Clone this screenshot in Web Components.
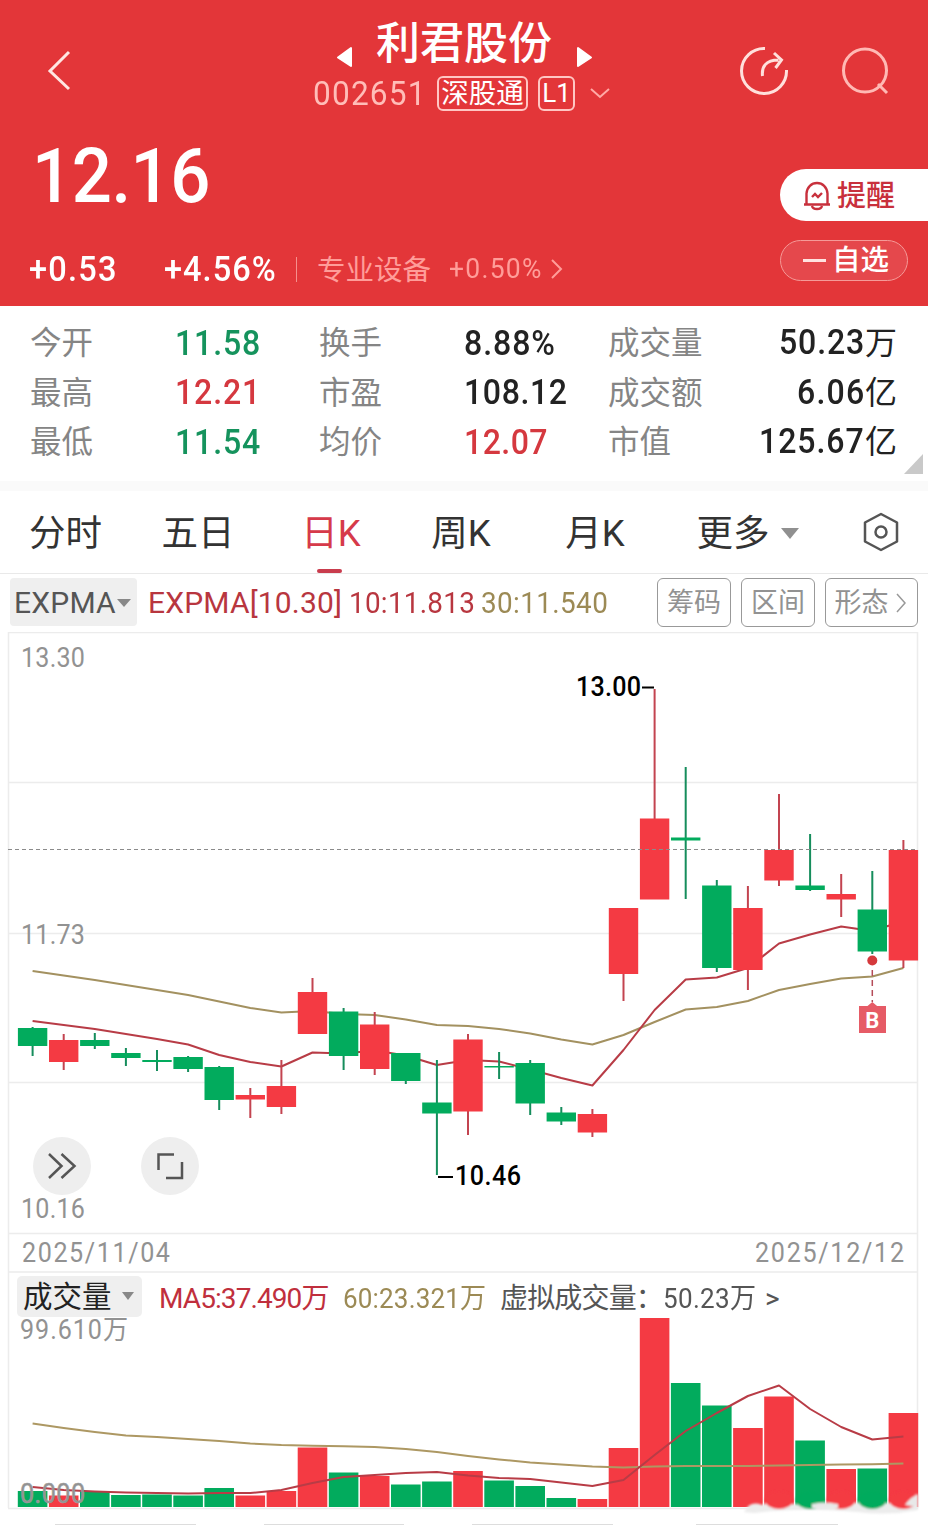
<!DOCTYPE html>
<html lang="zh-CN">
<head>
<meta charset="utf-8">
<title>利君股份 002651</title>
<style>
  body {
    margin: 0;
    background: #fff;
    font-family: Roboto, "Noto Sans CJK SC", sans-serif;
    color: #222;
  }
</style>
</head>
<body>
<stock-page></stock-page>

<script>
const RED = '#f43a43';
const GREEN = '#02ab5d';
const PITCH = 31.1;
const FIRST_X = 32.6;
// Figures are set narrower than the face's default
const CONDENSE = 0.93;

// [direction, body top, body bottom, wick top, wick bottom]
const CANDLES = [
  ['g', 1028, 1046, 1027, 1056],
  ['r', 1040, 1062, 1034, 1070],
  ['g', 1040, 1046, 1033, 1049],
  ['g', 1053, 1058, 1048, 1066],
  ['g', 1060, 1062, 1050, 1071],
  ['g', 1057, 1069, 1056, 1072],
  ['g', 1067, 1100, 1066, 1110],
  ['r', 1095, 1099.5, 1088, 1118],
  ['r', 1086, 1107, 1060, 1114],
  ['r', 992, 1034, 978, 1034],
  ['g', 1011.5, 1056, 1008, 1070],
  ['r', 1024.5, 1069, 1012, 1075],
  ['g', 1053, 1081, 1053, 1084],
  ['g', 1102.5, 1113.5, 1060, 1175],
  ['r', 1039.5, 1111.5, 1034, 1135],
  ['g', 1066, 1067.5, 1052, 1079],
  ['g', 1063, 1103.5, 1060, 1115],
  ['g', 1112.5, 1121.5, 1107, 1125],
  ['r', 1114, 1132.5, 1109, 1137],
  ['r', 908, 974, 908, 1001],
  ['r', 818.5, 899.5, 689, 899],
  ['g', 837.5, 840.5, 767, 899],
  ['g', 885.5, 968, 880, 972],
  ['r', 908, 970, 886, 990],
  ['r', 850, 880.5, 794, 886],
  ['g', 885.5, 890, 834, 891],
  ['r', 894, 899.5, 874, 917],
  ['g', 909.5, 951.5, 871, 954],
  ['r', 850, 960.5, 840, 968]
];

const VOLUME_TOPS = [
  1491, 1495.5, 1491, 1495, 1494.5, 1495.5, 1488, 1495.5, 1491, 1447.5,
  1472.5, 1476, 1484.5, 1481.5, 1471, 1480.5, 1486, 1498, 1499, 1448,
  1318, 1383, 1405.5, 1428, 1396.5, 1440.5, 1469, 1468.5, 1413
];

const EXPMA10 = [
  1021, 1025, 1029, 1034, 1039, 1044.5, 1055, 1062, 1066.5, 1052.5,
  1053.5, 1050.5, 1055.5, 1065, 1060, 1061.5, 1069.5, 1078, 1085.5, 1050,
  1010, 979.5, 977.5, 968, 943.5, 934.5, 926.5, 931, 921
];
const EXPMA30 = [
  971, 975.5, 980, 985, 990, 995, 1001.5, 1008, 1012.5, 1011,
  1014, 1015, 1019.5, 1025, 1026, 1029, 1033.5, 1039.5, 1044.5, 1035,
  1022, 1009.5, 1007, 1001, 990, 984, 978.5, 976.5, 968
];
const VOL_MA5 = [
  1487, 1490, 1491.5, 1492.5, 1493, 1493.5, 1493, 1493, 1490, 1483,
  1477, 1475, 1473, 1472, 1475.5, 1478, 1479, 1482.5, 1486, 1480,
  1455, 1431, 1413, 1396, 1385.5, 1409, 1427, 1439.5, 1436.5
];
const VOL_MA60 = [
  1423.5, 1428, 1432, 1435.5, 1437, 1439, 1441, 1443.5, 1445, 1445.7,
  1446.3, 1447, 1449, 1452, 1456, 1459.5, 1462.5, 1464.5, 1466.5, 1467.5,
  1466.5, 1466, 1466, 1466, 1465.5, 1465, 1464.5, 1464.2, 1463.5
];

const xAt = i => FIRST_X + i * PITCH;
const points = values => values.map((y, i) => `${xAt(i).toFixed(1)},${y}`).join(' ');
const label = (cls, x, y, width, text) =>
  `<text class="${cls}" transform="translate(${x} ${y}) scale(${CONDENSE} 1)" textLength="${width / CONDENSE}">${text}</text>`;

function define(name, html) {
  customElements.define(name, class extends HTMLElement {
    constructor() {
      super();
      this.attachShadow({ mode: 'open' }).innerHTML = html;
    }
  });
}

/**
 * A run of text tracked so that it fills the given width.
 * Runs that start with a figure or a sign are condensed first.
 */
class FitText extends HTMLElement {
  constructor() {
    super();
    this.attachShadow({ mode: 'open' }).innerHTML = `
      <style>
        :host { display: block; white-space: nowrap; flex: none; }
        span { display: inline-block; transform-origin: 0 50%; }
      </style>
      <span><slot></slot></span>`;
  }

  connectedCallback() {
    const run = this.shadowRoot.querySelector('span');
    const width = parseFloat(this.getAttribute('width'));
    const scale = /^[\d+]/.test(this.textContent) ? CONDENSE : 1;
    const count = [...this.textContent].length;
    run.style.letterSpacing = ((width / scale - run.offsetWidth) / count) + 'px';
    run.style.transform = `scaleX(${scale})`;
    this.style.width = width + 'px';
  }
}

// --- Header ---

define('stock-header', `
  <style>
    :host {
      display: flex;
      flex-direction: column;
      height: 306px;
      background: #e33639;
      color: #fff;
      overflow: hidden;
    }
    svg { display: block; flex: none; fill: none; }
    .nav { display: flex; height: 120px; }
    .back { margin: 50px 0 0 46px; }
    .title { width: 300px; margin-left: 240px; }
    .name { display: flex; height: 72px; padding-left: 24px; }
    .name svg { margin-top: 46px; }
    .name b { font-size: 44px; font-weight: 500; line-height: 64px; margin: 12px 25px 0 23px; width: 176px; white-space: nowrap; }
    .code { display: flex; align-items: center; height: 42px; }
    .code .num { font-size: 34px; color: #ffbdb8; }
    .tag {
      box-sizing: border-box; height: 35px; border: 2px solid #ffc6c3; border-radius: 6px;
      line-height: 31px; text-align: center; font-size: 27.5px; white-space: nowrap;
    }
    .share { margin: 46px 0 0 126px; }
    .search { margin: 46px 0 0 51px; }
    .body { display: flex; justify-content: space-between; height: 186px; }
    .price { font-size: 76px; font-weight: 500; line-height: 90px; margin: 11px 0 0 32px; }
    .change { display: flex; align-items: center; height: 40px; margin-top: 28px; padding-left: 29px; font-size: 35px; font-weight: 500; }
    .industry { color: #ff9d99; font-weight: 400; }
    .bar { width: 1px; height: 25px; background: #f5908d; margin: 0 20px 0 20px; }
    .side { width: 148px; padding-top: 49px; }
    .alert {
      display: flex; align-items: center; height: 52px; background: #fff; color: #c8303c;
      border-radius: 26px 0 0 26px; font-size: 29px; font-weight: 500; box-sizing: border-box; padding: 0 0 5px 23px;
    }
    .pick {
      display: flex; align-items: center; box-sizing: border-box; width: 128px; height: 41px; margin-top: 19px;
      border: 1.5px solid #f59a98; border-radius: 21px; background: #e5484c; font-size: 28.5px; font-weight: 500;
      padding-left: 22px; line-height: 38px;
    }
    .pick i { width: 23px; height: 3px; background: #ffe3e0; margin-right: 6px; }
  </style>
  <div class="nav">
    <svg class="back" width="27" height="42" viewBox="0 0 27 42"><path d="M23 2 4 21l19 18" stroke="#ffe6e2" stroke-width="3"/></svg>
    <div class="title">
      <div class="name">
        <svg width="16" height="23" viewBox="0 0 16 23"><path d="M14 2v18L1 11.500z" fill="#fff" stroke="#fff" stroke-width="2" stroke-linejoin="round"/></svg>
        <b>利君股份</b>
        <svg width="16" height="23" viewBox="0 0 16 23"><path d="M1 2v18l13-8.500z" fill="#fff" stroke="#fff" stroke-width="2" stroke-linejoin="round"/></svg>
      </div>
      <div class="code">
        <fit-text class="num" width="114">002651</fit-text>
        <span class="tag" style="width:91px;margin-left:10px">深股通</span>
        <span class="tag" style="width:37px;margin-left:10px;font-size:26px">L1</span>
        <svg width="22" height="14" viewBox="0 0 22 14" style="margin-left:14px"><path d="m2 3 9 8 9-8" stroke="#ffaaa6" stroke-width="2"/></svg>
      </div>
    </div>
    <svg class="share" width="50" height="50" viewBox="0 0 50 50" stroke="#ffe0dc" stroke-width="3">
      <path d="M26 2.500A22.500 22.500 0 1 0 47.500 24"/>
      <path d="M23.500 30c-1-9 3-16 16-16M35 7l7.500 7-6 8"/>
    </svg>
    <svg class="search" width="50" height="50" viewBox="0 0 50 50" stroke="#ffb9b4" stroke-width="3">
      <circle cx="25" cy="24.500" r="21.500"/><path d="m38 38 9 9"/>
    </svg>
  </div>
  <div class="body">
    <div>
      <fit-text class="price" width="178">12.16</fit-text>
      <div class="change">
        <fit-text width="89">+0.53</fit-text>
        <fit-text width="113" style="margin-left:46px">+4.56%</fit-text>
        <span class="bar" style="margin-left:19px"></span>
        <fit-text class="industry" width="114" style="font-size:28.500px;margin-top:-4px">专业设备</fit-text>
        <fit-text class="industry" width="94" style="font-size:28.500px;margin:-1px 0 0 18px">+0.50%</fit-text>
        <svg width="14" height="24" viewBox="0 0 14 24" style="margin-left:7px"><path d="m2 3 9 9-9 9" stroke="#ff9d99" stroke-width="2"/></svg>
      </div>
    </div>
    <div class="side">
      <div class="alert">
        <svg width="28" height="30" viewBox="0 0 28 30" stroke="#c8303c" stroke-width="2.400" style="margin:6px 6px 0 0">
          <path d="M1 23.500h26M3.500 23V12.500C4 6 8.500 2 14 2s10 4 10.500 10.500V23M9 25c1 4 9 4 10 0"/>
          <path d="m9 16 3-3 3 3 4-4"/>
        </svg>
        <span>提醒</span>
      </div>
      <div class="pick"><i></i><span>自选</span></div>
    </div>
  </div>
`);

// --- Quote figures ---

define('quote-stats', `
  <style>
    :host { display: block; position: relative; height: 175px; box-sizing: border-box; padding: 13px 31px 0 30px; }
    .row { display: flex; height: 49.500px; align-items: center; font-size: 34.500px; line-height: 49px; }
    .k { font-size: 31.500px; color: #858585; flex: none; }
    .k1 { width: 145px; }
    .k2 { width: 145px; }
    .k3 { width: 120px; }
    .v { width: 144px; flex: none; }
    .last { display: flex; flex: 1; justify-content: flex-end; }
    .last i { font-style: normal; font-size: 32px; }
    .up { color: #d5383f; }
    .down { color: #15935d; }
    fit-text { font-weight: 500; margin-top: -1px; }
    /* fold mark in the panel's corner */
    .fold { position: absolute; right: 5px; bottom: 7px; width: 19px; height: 20px; background: #c9c9c9; clip-path: polygon(100% 0, 100% 100%, 0 100%); }
  </style>
  <div class="row">
    <span class="k k1">今开</span><div class="v down"><fit-text width="86">11.58</fit-text></div>
    <span class="k k2">换手</span><div class="v"><fit-text width="92">8.88%</fit-text></div>
    <span class="k k3">成交量</span><span class="last"><fit-text width="86">50.23</fit-text><i>万</i></span>
  </div>
  <div class="row">
    <span class="k k1">最高</span><div class="v up"><fit-text width="86">12.21</fit-text></div>
    <span class="k k2">市盈</span><div class="v"><fit-text width="104">108.12</fit-text></div>
    <span class="k k3">成交额</span><span class="last"><fit-text width="68">6.06</fit-text><i>亿</i></span>
  </div>
  <div class="row">
    <span class="k k1">最低</span><div class="v down"><fit-text width="86">11.54</fit-text></div>
    <span class="k k2">均价</span><div class="v up"><fit-text width="84">12.07</fit-text></div>
    <span class="k k3">市值</span><span class="last"><fit-text width="106">125.67</fit-text><i>亿</i></span>
  </div>
  <i class="fold"></i>
`);

// --- Period tabs ---

class PeriodTab extends HTMLElement {
  constructor() {
    super();
    this.attachShadow({ mode: 'open' }).innerHTML = `
      <style>
        :host {
          display: flex; flex-direction: column; align-items: center; justify-content: space-between;
          height: 82px; color: #333; font-size: 36.500px; line-height: 85px; white-space: nowrap;
        }
        :host([active]) { color: #d63a4a; }
        span { display: block; height: 78px; }
        i { display: block; width: 25px; height: 4px; border-radius: 2px; margin-right: 4px; }
        :host([active]) i { background: #c93c4d; }
      </style>
      <span><slot></slot></span><i></i>`;
  }
}

define('period-tabs', `
  <style>
    :host { display: flex; height: 82px; border-top: 10px solid #fafafa; border-bottom: 1px solid #e9e9e9; padding-left: 29px; }
    .more { width: 0; height: 0; border: 9.500px solid transparent; border-top: 11px solid #909090; border-bottom: 0; margin: 37px 0 0 12px; }
    svg { margin: 21px 0 0 63px; fill: none; }
  </style>
  <period-tab style="width:73px">分时</period-tab>
  <period-tab style="width:72px;margin-left:60px">五日</period-tab>
  <period-tab style="width:60px;margin-left:67px" active>日K</period-tab>
  <period-tab style="width:62px;margin-left:69px">周K</period-tab>
  <period-tab style="width:62px;margin-left:72px">月K</period-tab>
  <period-tab style="width:72px;margin-left:71px">更多</period-tab>
  <i class="more"></i>
  <svg width="38" height="40" viewBox="0 0 38 40" stroke="#555" stroke-width="2.500" stroke-linejoin="round">
    <path d="M19 2 35 10.500v19L19 38 3 29.500v-19z"/><circle cx="19" cy="20" r="5.500"/>
  </svg>
`);

// --- Indicator bar ---

define('indicator-bar', `
  <style>
    :host { display: flex; height: 54px; padding: 4px 10px 0 10px; font-size: 30px; line-height: 49px; }
    .pick { display: flex; box-sizing: border-box; width: 127px; height: 48px; background: #efefef; border-radius: 4px; padding-left: 4px; color: #555; }
    .pick i { width: 0; height: 0; border: 7px solid transparent; border-top: 8px solid #888; border-bottom: 0; margin: 21px 0 0 1px; }
    .legend { flex: 1; display: flex; padding-left: 11px; color: #b8363f; }
    .slow { color: #9c8a55; }
    .btn {
      display: flex; justify-content: center; align-items: center; box-sizing: border-box; width: 74px; height: 49px; margin-left: 10px;
      border: 1px solid #999; border-radius: 6px; color: #929292; font-size: 27px; line-height: 46px; white-space: nowrap; flex: none;
    }
  </style>
  <div class="pick"><fit-text width="102">EXPMA</fit-text><i></i></div>
  <div class="legend">
    <fit-text width="194">EXPMA[10.30]</fit-text>
    <fit-text width="126" style="margin-left:7px">10:11.813</fit-text>
    <fit-text class="slow" width="127" style="margin-left:6px">30:11.540</fit-text>
  </div>
  <span class="btn">筹码</span>
  <span class="btn">区间</span>
  <span class="btn" style="width:93px">形态<svg width="14" height="22" viewBox="0 0 14 22" fill="none" style="margin-left:6px"><path d="m2 2 8 9-8 9" stroke="#999" stroke-width="1.500"/></svg></span>
`);

// --- Charts ---

class CandleChart extends HTMLElement {
  constructor() {
    super();
    this.attachShadow({ mode: 'open' });
  }

  connectedCallback() {
    const wicks = { r: '#c34450', g: '#168d5c' };
    const candles = CANDLES.map(([dir, top, bottom, high, low], i) => {
      const x = xAt(i);
      return `
        <rect x="${x - 1}" y="${high}" width="2" height="${low - high}" fill="${wicks[dir]}"/>
        <rect x="${x - 14.7}" y="${top}" width="29.400" height="${bottom - top}" fill="${dir === 'r' ? RED : GREEN}"/>`;
    }).join('');

    this.shadowRoot.innerHTML = `
      <style>
        :host { display: block; height: 641px; }
        svg { display: block; }
        .axis { font-size: 27px; fill: #929292; }
        .mark { font-size: 27px; font-weight: 500; fill: #000; }
      </style>
      <svg width="928" height="641" viewBox="0 632 928 641">
        <g stroke="#ececec" stroke-width="1.500">
          <path d="M8 632.500H918M8 782.500H918M8 933.500H918M8 1082.500H918M8 1233.500H918M8 1272H918"/>
          <path d="M8.500 632V1273M917.500 632V1273"/>
        </g>
        ${label('axis', 21, 667, 64, '13.30')}
        ${label('axis', 21, 944, 64, '11.73')}
        ${label('axis', 21, 1218, 64, '10.16')}
        ${label('axis', 22, 1262, 148, '2025/11/04')}
        ${label('axis', 755, 1262, 149, '2025/12/12')}
        <g fill="none" stroke-width="2" stroke-linejoin="round">
          <polyline points="${points(EXPMA30)}" stroke="#a39160"/>
          <polyline points="${points(EXPMA10)}" stroke="#b83c46"/>
        </g>
        ${candles}
        <path d="M8 849.500H918" stroke="#8b8b8b" stroke-dasharray="4 3"/>
        ${label('mark', 576, 696, 65, '13.00')}
        <path d="M642 687.500h12M438 1177h15" stroke="#000" stroke-width="2"/>
        ${label('mark', 455, 1185, 66, '10.46')}
        <circle cx="872.300" cy="960.500" r="5" fill="#d5393c"/>
        <path d="M872.300 970V1002" stroke="#b54c58" stroke-width="1.500" stroke-dasharray="6 4"/>
        <path d="M859 1006h8.500l4.800-4 4.800 4h8.900v27h-27z" fill="#e65b66"/>
        <text x="872.300" y="1028" font-size="22" font-weight="700" fill="#fff" text-anchor="middle">B</text>
        <g fill="#eee"><circle cx="62" cy="1166" r="29"/><circle cx="170" cy="1166" r="29"/></g>
        <g fill="none" stroke="#555" stroke-width="2.500">
          <path d="m49 1154 12.500 12L49 1178M61.500 1154l13 12-13 12"/>
          <path d="M174 1154.500h-15.500V1170M166 1178h16v-16"/>
        </g>
      </svg>`;
  }
}

class VolumeChart extends HTMLElement {
  constructor() {
    super();
    this.attachShadow({ mode: 'open' });
  }

  connectedCallback() {
    const bars = VOLUME_TOPS.map((top, i) => {
      const fill = CANDLES[i][0] === 'r' ? RED : GREEN;
      return `<rect x="${xAt(i) - 14.8}" y="${top}" width="29.600" height="${1507 - top}" fill="${fill}"/>`;
    }).join('');
    const drips = [24, 25, 26, 27, 28].map(i =>
      `<ellipse cx="${xAt(i)}" cy="1500" rx="14" ry="9" fill="${CANDLES[i][0] === 'r' ? RED : GREEN}"/>`
    ).join('');

    this.shadowRoot.innerHTML = `
      <style>
        :host { display: block; height: 252px; }
        .head { display: flex; height: 45px; padding: 3px 0 0 17px; box-sizing: border-box; font-size: 28px; line-height: 45px; }
        .pick { display: flex; box-sizing: border-box; width: 125px; height: 41px; padding-left: 6px; background: #efefef; border-radius: 5px; line-height: 42px; font-size: 29.500px; }
        .pick i { width: 0; height: 0; border: 6.500px solid transparent; border-top: 8px solid #888; border-bottom: 0; margin: 16px 0 0 10px; }
        .fast { color: #c02f3d; margin-left: 17px; }
        .slow { color: #9c8a55; margin-left: 14px; }
        .virtual { color: #555; margin-left: 14px; }
        svg { display: block; }
        .axis { font-size: 27px; fill: #929292; }
        .over { stroke: #a0a0a0; stroke-width: .6; }
      </style>
      <div class="head">
        <div class="pick"><span>成交量</span><i></i></div>
        <fit-text class="fast" width="170">MA5:37.490万</fit-text>
        <fit-text class="slow" width="143">60:23.321万</fit-text>
        <fit-text class="virtual" width="163">虚拟成交量：</fit-text>
        <fit-text class="virtual" style="margin-left:0" width="93">50.23万</fit-text>
        <span class="virtual" style="margin-left:9px">&gt;</span>
      </div>
      <svg width="928" height="207" viewBox="0 1318 928 207" overflow="visible">
        <path d="M8.500 1273V1508M917.500 1273V1508M8 1508.500H918" stroke="#ececec" stroke-width="1.500"/>
        ${label('axis', 20, 1339, 108, '99.610万')}
        ${bars}
        <g fill="none" stroke-width="2" stroke-linejoin="round">
          <polyline points="${points(VOL_MA60)}" stroke="#ad9863"/>
          <polyline points="${points(VOL_MA5)}" stroke="#b83c46"/>
        </g>
        ${label('axis over', 20, 1503, 65, '0.000')}
        <filter id="soft"><feGaussianBlur stdDeviation="1.200"/></filter>
        <g filter="url(#soft)">
          <path d="M744 1512q6-12 18-7l10-4q12 4 22 3l12 2 20-3q12 0 18 1l20-2 12 1 18 0 10-5 14-4v16q-30 6-60 2-60-5-104 1z" fill="#ececec"/>
          ${drips}
          <path d="M812 1504q12-3 26 0v4h-26zM905 1505q6-9 13-10v12z" fill="#e8e8e8"/>
        </g>
        <path d="M55 1524.500H196M264 1524.500H404M472 1524.500H613M696 1524.500H838" stroke="#ddd"/>
      </svg>`;
  }
}

define('stock-page', `
  <style>
    :host { display: block; width: 928px; height: 1525px; overflow: hidden; background: #fff; }
  </style>
  <stock-header></stock-header>
  <quote-stats></quote-stats>
  <period-tabs></period-tabs>
  <indicator-bar></indicator-bar>
  <candle-chart></candle-chart>
  <volume-chart></volume-chart>
`);

customElements.define('period-tab', PeriodTab);
customElements.define('candle-chart', CandleChart);
customElements.define('volume-chart', VolumeChart);
customElements.define('fit-text', FitText);
</script>
</body>
</html>
